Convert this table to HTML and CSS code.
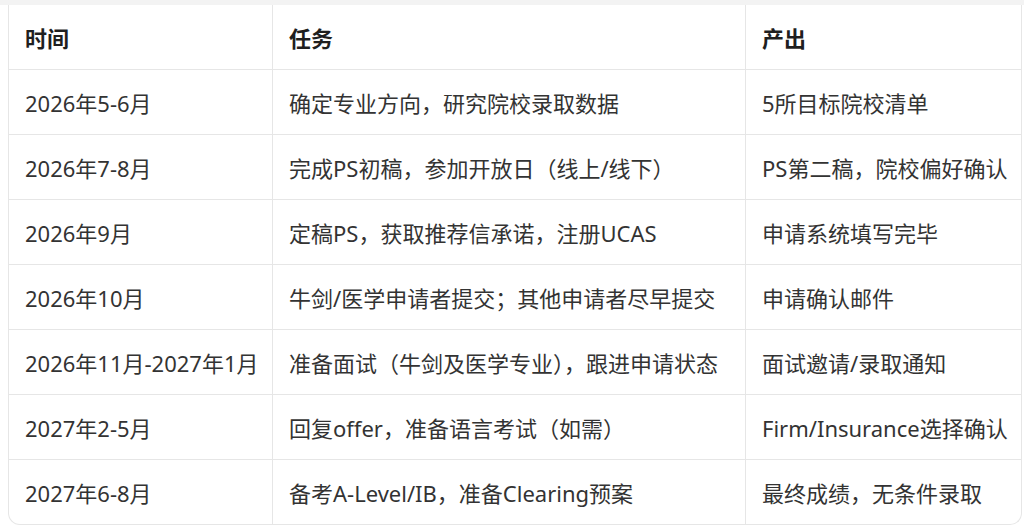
FILE: index.html
```html
<!DOCTYPE html>
<html lang="zh-CN">
<head>
<meta charset="utf-8">
<title>申请时间规划</title>
<link rel="stylesheet" href="styles.css">
</head>
<body>
<div class="top-band"></div>
<div class="wrap">
  <table class="plan">
    <colgroup>
      <col class="c1"><col class="c2"><col class="c3">
    </colgroup>
    <thead>
      <tr><th>时间</th><th>任务</th><th>产出</th></tr>
    </thead>
    <tbody>
      <tr><td>2026年5-6月</td><td>确定专业方向，研究院校录取数据</td><td>5所目标院校清单</td></tr>
      <tr><td>2026年7-8月</td><td>完成PS初稿，参加开放日（线上/线下）</td><td>PS第二稿，院校偏好确认</td></tr>
      <tr><td>2026年9月</td><td>定稿PS，获取推荐信承诺，注册UCAS</td><td>申请系统填写完毕</td></tr>
      <tr><td>2026年10月</td><td>牛剑/医学申请者提交；其他申请者尽早提交</td><td>申请确认邮件</td></tr>
      <tr><td>2026年11月-2027年1月</td><td>准备面试（牛剑及医学专业），跟进申请状态</td><td>面试邀请/录取通知</td></tr>
      <tr><td>2027年2-5月</td><td>回复offer，准备语言考试（如需）</td><td>Firm/Insurance选择确认</td></tr>
      <tr><td>2027年6-8月</td><td>备考A-Level/IB，准备Clearing预案</td><td>最终成绩，无条件录取</td></tr>
    </tbody>
  </table>
</div>
</body>
</html>
```

FILE: styles.css
```css
html, body {
  margin: 0;
  padding: 0;
  background: #ffffff;
}
body {
  font-family: "Noto Sans", "Noto Sans CJK SC", sans-serif;
  color: #333333;
}
.top-band {
  height: 5px;
  background: #f3f3f3;
}
.wrap {
  padding: 0 2px 0 8px;
}
.plan {
  width: 100%;
  table-layout: fixed;
  border-collapse: separate;
  border-spacing: 0;
  border: 1px solid #e6e6e6;
  border-top: none;
  border-radius: 0 0 12px 12px;
}
.c1 { width: 264px; }
.c2 { width: 473px; }
.c3 { width: auto; }
.plan th, .plan td {
  height: 64px;
  padding: 0 16px;
  text-align: left;
  font-size: 22px;
  border-right: 1px solid #e6e6e6;
  border-bottom: 1px solid #e6e6e6;
  white-space: nowrap;
  vertical-align: middle;
}
.plan th:last-child, .plan td:last-child {
  border-right: none;
}
.plan tbody tr:last-child td {
  border-bottom: none;
}
.plan th {
  font-weight: 700;
  color: #1f1f1f;
}
.plan td {
  font-weight: 400;
  color: #333333;
}
```
